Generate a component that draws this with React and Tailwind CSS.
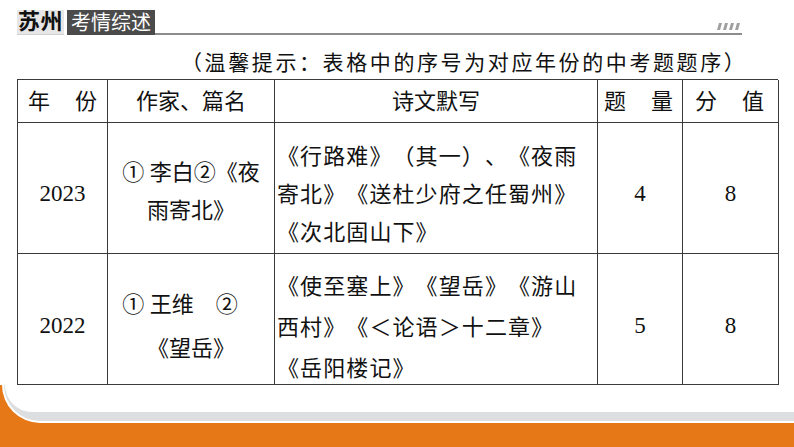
import React from 'react';

const cjk = "font-['Liberation_Serif','Noto_Sans_CJK_SC',serif]";

function Cell({ className = '', children }) {
  return (
    <div className={`border-r border-b border-[#3a3a3a] flex items-center ${className}`}>
      {children}
    </div>
  );
}

function Hatch() {
  return (
    <svg width="24" height="7" viewBox="0 0 24 7">
      {[0, 6, 12, 18].map((x) => (
        <polygon key={x} points={`${x + 2},0 ${x + 5},0 ${x + 3},7 ${x},7`} fill="#a0a0a0" />
      ))}
    </svg>
  );
}

export default function App() {
  return (
    <div className={`w-[794px] h-[447px] bg-white overflow-hidden flex flex-col text-[#111] [text-spacing-trim:space-all] ${cjk}`}>
      {/* title bar */}
      <div className="pt-[8px] pl-[17px] flex items-end h-[35px]">
        <div className="h-[25px] w-[47px] bg-[#e6e6e6] border-b border-[#d0d0d0] flex items-center justify-center text-[22px] font-bold leading-none tracking-[0.5px]">
          苏州
        </div>
        <div className="ml-[3px] h-[25px] w-[88px] bg-[#4b4b4b] text-white flex items-center justify-center text-[20px] leading-none">
          考情综述
        </div>
        <div className="w-[587px] h-[25px] border-b-2 border-[#8c8c8c] flex justify-end items-end pb-[3px] pr-[1px]">
          <Hatch />
        </div>
      </div>

      {/* hint */}
      <div className="pt-[14px] mb-[2px] pl-[181px] text-[21px] leading-[28px] tracking-[2.6px] whitespace-nowrap">
        （温馨提示：表格中的序号为对应年份的中考题题序）
      </div>

      {/* table */}
      <div className="ml-[17px] w-[761px] grid grid-cols-[90px_167px_323px_85px_96px] grid-rows-[43px_131px_131px] border-l border-t border-[#3a3a3a] text-[22px]">
        <Cell className="justify-between px-[10px]">
          <span>年</span>
          <span>份</span>
        </Cell>
        <Cell className="justify-center">作家、篇名</Cell>
        <Cell className="justify-center">诗文默写</Cell>
        <Cell className="justify-between pl-[6px] pr-[9px]">
          <span>题</span>
          <span>量</span>
        </Cell>
        <Cell className="justify-between pl-[12px] pr-[14px]">
          <span>分</span>
          <span>值</span>
        </Cell>

        <Cell className="justify-center pt-[13px] text-[23px]">2023</Cell>
        <Cell className="justify-center pt-[7px]">
          <div className="leading-[38px] text-center">
            <div>① 李白②《夜</div>
            <div>雨寄北》</div>
          </div>
        </Cell>
        <Cell className="pt-[13px] pl-[2px]">
          <div className="leading-[38px] tracking-[1.1px] whitespace-nowrap">
            <div>《行路难》（其一）、《夜雨</div>
            <div>寄北》《送杜少府之任蜀州》</div>
            <div>《次北固山下》</div>
          </div>
        </Cell>
        <Cell className="justify-center pt-[13px] text-[23px]">4</Cell>
        <Cell className="justify-center pt-[13px] text-[23px]">8</Cell>

        <Cell className="justify-center pt-[15px] text-[23px]">2022</Cell>
        <Cell className="justify-center pt-[15px]">
          <div className="leading-[44px] text-center">
            <div className="whitespace-pre">① 王维　②　</div>
            <div>《望岳》</div>
          </div>
        </Cell>
        <Cell className="pt-[17px] pl-[2px]">
          <div className="leading-[41px] tracking-[1.1px] whitespace-nowrap">
            <div>《使至塞上》《望岳》《游山</div>
            <div>西村》《＜论语＞十二章》</div>
            <div>《岳阳楼记》</div>
          </div>
        </Cell>
        <Cell className="justify-center pt-[15px] text-[23px]">5</Cell>
        <Cell className="justify-center pt-[15px] text-[23px]">8</Cell>
      </div>

      {/* footer band */}
      <div className="h-[62px] bg-[#e67818]">
        <div className="h-[38px] ml-[2px] bg-[#dcdedf] rounded-bl-[42px] border-b-2 border-l-2 border-white">
          <div className="h-[27px] ml-[1px] bg-white rounded-bl-[36px]" />
        </div>
      </div>
    </div>
  );
}
